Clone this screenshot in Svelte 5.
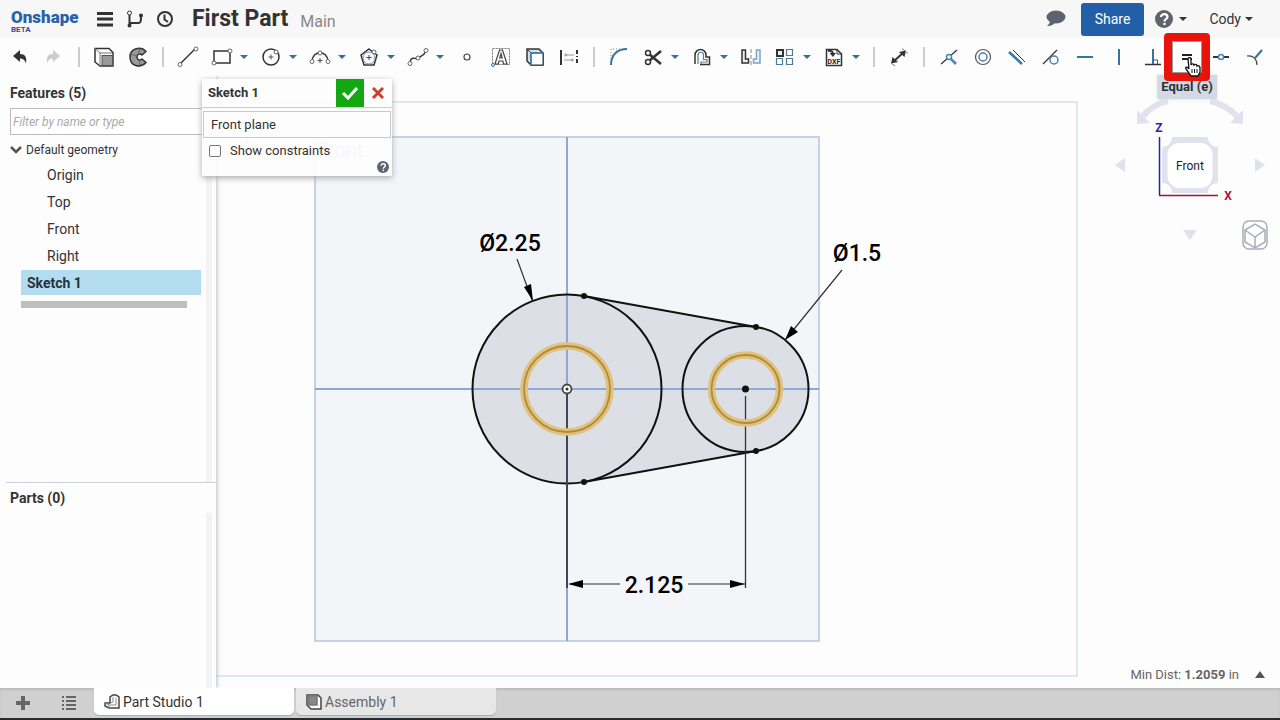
<script lang="ts">
  type Tool = { id: string; label: string; menu?: boolean; active?: boolean };

  // Toolbar groups, split by a thin rule. Shapes live in `glyphs`, on a 24x24 grid.
  const groups: Tool[][] = [
    [
      { id: 'undo', label: 'Undo' },
      { id: 'redo', label: 'Redo' },
    ],
    [
      { id: 'extrude', label: 'Extrude' },
      { id: 'revolve', label: 'Revolve' },
    ],
    [
      { id: 'line', label: 'Line' },
      { id: 'rect', label: 'Rectangle', menu: true },
      { id: 'circle', label: 'Circle', menu: true },
      { id: 'arc', label: 'Arc', menu: true },
      { id: 'polygon', label: 'Polygon', menu: true },
      { id: 'spline', label: 'Spline', menu: true },
      { id: 'point', label: 'Point' },
      { id: 'text', label: 'Text' },
      { id: 'use', label: 'Use' },
      { id: 'construction', label: 'Construction' },
    ],
    [
      { id: 'fillet', label: 'Fillet' },
      { id: 'trim', label: 'Trim', menu: true },
      { id: 'offset', label: 'Offset', menu: true },
      { id: 'mirror', label: 'Mirror' },
      { id: 'pattern', label: 'Pattern', menu: true },
      { id: 'dxf', label: 'Insert DXF', menu: true },
    ],
    [{ id: 'dimension', label: 'Dimension' }],
    [
      { id: 'coincident', label: 'Coincident' },
      { id: 'concentric', label: 'Concentric' },
      { id: 'parallel', label: 'Parallel' },
      { id: 'tangent', label: 'Tangent' },
      { id: 'horizontal', label: 'Horizontal' },
      { id: 'vertical', label: 'Vertical' },
      { id: 'perpendicular', label: 'Perpendicular' },
      { id: 'equal', label: 'Equal (e)', active: true },
      { id: 'midpoint', label: 'Midpoint' },
      { id: 'normal', label: 'Normal' },
    ],
  ];

  const undoArrow = 'M5 11 L12 5 V9 C17 9 19 12 18 18.500 C17 15 15 13.500 12 13.500 V17 Z';
  const k = 'stroke="#333" stroke-width="1.500"';
  const b = 'stroke="#3573a5" stroke-width="2"';
  const dot = (x: number, y: number) =>
    `<circle cx="${x}" cy="${y}" r="2" fill="#fff" stroke="#666" stroke-width="1"/>`;

  const glyphs: Record<string, string> = {
    undo: `<path d="${undoArrow}" fill="#333"/>`,
    redo: `<path d="${undoArrow}" fill="#ccc" transform="translate(23 0) scale(-1 1)"/>`,
    extrude: `<path d="M3 3.500H17L21 7.500V21H8L3 17Z" fill="#fff" ${k}/><path d="M3 3.500L8 8H20M8 8V21" stroke="#777"/><rect x="10" y="10.500" width="10.500" height="10" fill="#999" stroke="#555"/>`,
    revolve: `<path d="M20 6.500C15 1 4 3 4 12s10 12 16 5.500l-4-3.500c-2 2-5 1-5-2s3-4 5-2Z" fill="#999" ${k}/><path d="M14 3.500L12.500 8.500M4.500 9l6 2M14 20l-1-5" stroke="#666"/>`,
    line: `<path d="M4 19L19 4" ${k}/>${dot(4, 19.5)}${dot(20, 4)}`,
    rect: `<rect x="4" y="6" width="16" height="12" ${k}/>${dot(4, 18)}${dot(20, 6)}`,
    circle: `<circle cx="12" cy="12" r="8" ${k}/><path d="M12 9.500v5M9.500 12h5" stroke="#555"/>${dot(17, 7)}`,
    arc: `<path d="M4 16C5 5 19 5 20 16" ${k}/><path d="M12 13v5M9.500 15.500h5" stroke="#444"/>${dot(4, 16.5)}${dot(20, 16.5)}${dot(12, 8)}`,
    polygon: `<path d="M12 4L20 10L17 20H7L4 10Z" ${k}/><circle cx="12" cy="13" r="6" stroke="#6b91ba"/><path d="M12 10v5M9.500 12.500h5" stroke="#444"/>${dot(17, 7)}`,
    spline: `<path d="M4 18C5 10 9 15 12 13S18 11 20 6" ${k}/>${dot(4, 18.5)}${dot(12, 13)}${dot(20, 5.5)}`,
    point: `<circle cx="12" cy="12" r="3" fill="#fff" stroke="#444" stroke-width="1.200"/>`,
    text: `<rect x="3.500" y="3.500" width="17" height="16" stroke="#777" stroke-dasharray="2 1"/><path d="M6 19L10.500 5H13.500L18 19H14.500L13.800 16H10L9.300 19ZM10.800 13H13.200L12 8.500Z" fill="#fff" stroke="#444" stroke-width="1.200" fill-rule="evenodd"/><circle cx="4" cy="20" r="1.500" fill="#fff" stroke="#3573a5"/>`,
    use: `<path d="M4 4H16L20 8V20H8L4 16Z" fill="#ddd" ${k}/><path d="M4 4L8 8" stroke="#333"/><rect x="8" y="8" width="12" height="12" fill="#fff" stroke="#333"/><path d="M8 20V8H20" stroke="#2f86c5" stroke-width="1.500"/>`,
    construction: `<path d="M4 5V20" stroke="#333" stroke-width="2"/><path d="M20 5V20" stroke="#333" stroke-width="2" stroke-dasharray="4 2 1 2"/><path d="M7 10H17M7 15H17" stroke="#bbb" stroke-width="1.500"/><path d="M8 8l3 2-3 2M16 13l-3 2 3 2" fill="#aaa"/>`,
    fillet: `<path d="M4 20C4 10 10 4 20 4" ${b}/><path d="M4 14V4H14" stroke="#888" stroke-dasharray="1 2"/>`,
    trim: `<path d="M8 9L20 19M8 16L20 6" stroke="#333" stroke-width="2.500"/><circle cx="7" cy="8" r="2.500" fill="#fff" ${k}/><circle cx="7" cy="17" r="2.500" fill="#fff" ${k}/>`,
    offset: `<path d="M5 19V10a5.500 5.500 0 0 1 11 0V12H19.500V19.500H10" ${k}/><path d="M8 19V10a2.500 2.500 0 0 1 5.500 0V14.500H17V17H11V19" stroke="#4c81aa" stroke-width="1.200"/>`,
    mirror: `<path d="M3 5H6.500V14H9.500V18H3Z" fill="#eee" ${k}/><path d="M12 4V21" stroke="#888" stroke-dasharray="4 2"/><path d="M21 5H17.500V14H14.500V18H21Z" fill="#edf3f8" stroke="#7ca4c6" stroke-width="1.500"/>`,
    pattern: `<rect x="4" y="5" width="6" height="6" fill="#eee" stroke="#333" stroke-width="2"/><path d="M13.500 4.500h6v6h-6zM3.500 13.500h6v6h-6zM13.500 13.500h6v6h-6z" stroke="#487b94" stroke-width="1.200"/>`,
    dxf: `<path d="M4.500 4.500H15L19.500 9V20.500H4.500Z" fill="#fff" ${k}/><path d="M15 4.500V9H19.500" stroke="#333"/><path d="M6 6C9 5 11 7 11 9" stroke="#333" stroke-width="2"/><path d="M7.500 8H14L11 12Z" fill="#333"/><text x="12" y="19" fill="#222" font-size="7" font-weight="700" text-anchor="middle" font-family="Roboto, sans-serif">DXF</text>`,
    dimension: `<path d="M6 17L17 7" stroke="#333" stroke-width="2"/><path d="M4 18.500L5.500 12L11 17ZM19 5.500L12 7L17.500 12Z" fill="#333"/><path d="M4 18l4 3M15 3.500l6 5" stroke="#777"/>`,
    coincident: `<path d="M4 19L20 5" stroke="#333" stroke-width="1.200"/><path d="M12 12L19 19" stroke="#4488b9" stroke-width="2.500"/><circle cx="12" cy="12" r="2.500" fill="#fff" stroke="#4488b9" stroke-width="1.500"/>`,
    concentric: `<circle cx="12" cy="12" r="7.500" stroke="#555" stroke-width="1.200"/><circle cx="12" cy="12" r="4" stroke="#4882aa" stroke-width="1.500"/>`,
    parallel: `<path d="M4 7L17 19" stroke="#3978aa" stroke-width="2.500"/><path d="M8 5L20 17" stroke="#333"/>`,
    tangent: `<path d="M4 19L18 5" stroke="#333" stroke-width="1.200"/><circle cx="15" cy="15" r="4" stroke="#4882aa" stroke-width="1.500"/>`,
    horizontal: `<path d="M4 12H20" ${b}/>`,
    vertical: `<path d="M12 4V20" ${b}/>`,
    perpendicular: `<path d="M4 19.500H20" ${k}/><path d="M12 4V19" ${b}/><path d="M12 15h4.500v4" stroke="#555"/>`,
    equal: `<path d="M7 10H17M7 14H17" stroke="#222" stroke-width="2"/>`,
    midpoint: `<path d="M4 12H20" stroke="#333" stroke-width="2"/><circle cx="12" cy="12" r="2.500" fill="#fff" stroke="#4488b9" stroke-width="1.500"/>`,
    normal: `<path d="M4 11C10 10 14 14 14 20" stroke="#444" stroke-width="1.200"/><path d="M12 13L19 5" ${b}/>`,
  };

  const planes = ['Origin', 'Top', 'Front', 'Right'];
  let filter = $state('');
  let plane = $state('Front plane');
  let showConstraints = $state(false);
</script>

<div class="app">
  <header>
    <a class="logo" href="#home"><b>Onshape</b><small>BETA</small></a>
    <nav>
      <button aria-label="Document menu">
        <svg width="20" height="20" fill="none" stroke="#333" stroke-width="3"><path d="M2 4.500H18M2 10H18M2 16H18" /></svg>
      </button>
      <button aria-label="Versions">
        <svg width="20" height="20" fill="none" stroke="#333" stroke-width="2">
          <path d="M4.500 6V16M4.500 14H14C16 14 16 11 16 7" />
          <circle cx="4.500" cy="4" r="2" fill="#fff" stroke-width="1" />
          <circle cx="4.500" cy="16.500" r="1" fill="#333" />
          <circle cx="16" cy="6.500" r="1" fill="#333" />
        </svg>
      </button>
      <button aria-label="History">
        <svg width="20" height="20" fill="none" stroke="#333" stroke-width="2">
          <circle cx="10" cy="10" r="7" /><path d="M9.500 5.500V10.500L13 13" />
        </svg>
      </button>
    </nav>
    <h1>First Part</h1>
    <span class="branch">Main</span>
    <div class="account">
      <button aria-label="Comments">
        <svg width="20" height="20" fill="#5c6370">
          <ellipse cx="10" cy="8" rx="9.500" ry="6.500" /><path d="M4 11C4 14 3 15 1 17C5 17 8 16 10 12Z" />
        </svg>
      </button>
      <button class="share">Share</button>
      <button class="drop" aria-label="Help">{@render help(18)}<i class="caret dark"></i></button>
      <button class="drop user">Cody<i class="caret dark"></i></button>
    </div>
  </header>

  <div class="toolbar" role="toolbar" aria-label="Sketch tools">
    {#each groups as group, g}
      {#if g > 0}<span class="rule"></span>{/if}
      {#each group as tool}
        <div class="tool">
          <button class="icon" aria-label={tool.label}>
            <svg width="24" height="24" fill="none">{@html glyphs[tool.id]}</svg>
          </button>
          {#if tool.menu}
            <button class="more" aria-label="{tool.label} options"><i class="caret"></i></button>
          {/if}
          {#if tool.active}
            <span class="tip" role="tooltip">{tool.label}</span>
            <span class="highlight"></span>
            <svg class="pointer" width="18" height="20" viewBox="0 0 18 20">
              <path
                d="M3 2C3 0 6 0 6 2V8C7 6 9 7 9 8C10 7 12 7 12 9C13 8 15 9 15 11V15L13 19H6L1 12C0 10 2 9 4 12Z"
                fill="#fff" stroke="#111" stroke-width="1.300"
              />
              <path d="M7 12V16M9.500 12V16M12 12V16" stroke="#111" />
            </svg>
          {/if}
        </div>
      {/each}
    {/each}
  </div>

  <main>
    <svg class="canvas" viewBox="0 76 1280 612" fill="none">
      <rect x="100" y="102" width="977" height="574" stroke="#cfe3ea" stroke-width="1.500" />
      <rect x="315" y="137" width="504" height="504" fill="#f3f5f9" stroke="#b4c4e0" stroke-width="1.500" />
      <text x="317" y="157" class="plane-name">Front</text>

      <!-- part outline -->
      <path d="M584 296L756 327A63 63 0 0 1 756 451L584 482A94.500 94.500 0 1 1 584 296Z" fill="#dddfe7" />
      <path d="M315 389H819M567 137V641" stroke="#8ba9d3" stroke-width="2" />
      <g stroke="#111" stroke-width="2">
        <circle cx="567" cy="389" r="94.500" />
        <circle cx="745.500" cy="389" r="63" />
        <path d="M584 296L756 327M584 482L756 451" />
      </g>

      <!-- extension and dimension lines -->
      <path d="M567 392V588" stroke="#414555" stroke-width="2" />
      <path d="M745.500 396V588" stroke="#333" stroke-width="1.300" />
      <path d="M570 584H620M688 584H745M517 259L532 300M842 270L786 339" stroke="#333" stroke-width="1.200" />
      <path d="M568 584L583 580V588ZM745 584L730 580V588ZM533 301L524 287L531 284ZM785 340L791 326L798 332Z" fill="#000" />

      <!-- circles picked for the constraint -->
      {#each [{ x: 567, r: 43 }, { x: 745.5, r: 34 }] as c}
        <circle cx={c.x} cy="389" r={c.r} stroke="#dfc27d" stroke-width="7.500" />
        <circle cx={c.x} cy="389" r={c.r} stroke="#b18a37" stroke-width="1.800" />
      {/each}

      <g fill="#111">
        <circle cx="584" cy="296" r="3" />
        <circle cx="584" cy="482" r="3" />
        <circle cx="756" cy="327" r="3" />
        <circle cx="756" cy="451" r="3" />
        <circle cx="745.500" cy="389" r="3.500" />
      </g>
      <circle cx="567" cy="389" r="4.500" fill="#fff" stroke="#444" stroke-width="1.800" />
      <circle cx="567" cy="389" r="1.500" fill="#333" />

      <g class="dim">
        <text x="510" y="251">Ø2.25</text>
        <text x="857" y="261">Ø1.5</text>
        <text x="654" y="593">2.125</text>
      </g>
    </svg>

    <aside>
      <section class="features">
        <h2>Features (5)</h2>
        <input class="filter" bind:value={filter} aria-label="Filter features" placeholder="Filter by name or type" />
        <button class="folder">
          <svg width="12" height="8" fill="none" stroke="#555" stroke-width="2.500"><path d="M1 1L6 6L11 1" /></svg>
          Default geometry
        </button>
        <ul>
          {#each planes as name}
            <li>{name}</li>
          {/each}
        </ul>
        <button class="current">Sketch 1</button>
        <div class="rollback"></div>
      </section>
      <section class="parts">
        <h2>Parts (0)</h2>
      </section>
    </aside>

    <form class="dialog" onsubmit={(e) => e.preventDefault()}>
      <div class="dialog-head">
        <h2>Sketch 1</h2>
        <button class="ok" aria-label="Accept">
          <svg width="18" height="16" fill="none" stroke="#fff" stroke-width="3"><path d="M2 8L7 13L16 3" /></svg>
        </button>
        <button class="cancel" aria-label="Cancel">
          <svg width="12" height="12" fill="none" stroke="#c9402c" stroke-width="3"><path d="M1 1L11 11M11 1L1 11" /></svg>
        </button>
      </div>
      <input class="plane" bind:value={plane} aria-label="Sketch plane" />
      <label class="check"><input type="checkbox" bind:checked={showConstraints} />Show constraints</label>
      <button class="dialog-help" aria-label="Sketch help">{@render help(12)}</button>
    </form>

    <svg class="view-cube" width="160" height="160" viewBox="1110 92 160 160">
      <path d="M1168 101Q1153 104 1142 117M1210 101Q1225 104 1238 117" stroke="#e0e3ee" stroke-width="6" fill="none" />
      <path d="M1137 110V124L1150 123ZM1243 110V124L1230 123Z" fill="#dfe2ee" />
      <path d="M1115 165L1125 158V172ZM1265 165L1255 158V172ZM1183 230H1197L1190 240Z" fill="#dfe2ed" />
      <path
        d="M1172 137H1208C1208 143 1212 147 1218 147V183C1212 183 1208 187 1208 193H1172C1172 187 1168 183 1162 183V147C1168 147 1172 143 1172 137Z"
        fill="#e0e3ee"
      />
      <rect x="1167.500" y="143" width="45" height="45" rx="12" fill="#fff" />
      <path d="M1159.500 137V195" stroke="#3020a0" stroke-width="1.500" />
      <path d="M1159 195.500H1218" stroke="#a3133d" stroke-width="1.500" />
      <text x="1190" y="170" class="face">Front</text>
      <text x="1159" y="132" class="axis z">Z</text>
      <text x="1228" y="200" class="axis x">X</text>
      <g fill="#fff" stroke="#aaadb8" stroke-width="1.500">
        <rect x="1243" y="221" width="24" height="28" rx="6" />
        <path d="M1245 230L1255 224L1265 230V242L1255 248L1245 242ZM1245 230L1255 237L1265 230M1255 237V248" />
      </g>
    </svg>

    <div class="measure">
      <span>Min Dist: <b>1.2059</b> in</span>
      <svg width="10" height="8" fill="#555"><path d="M0 7L5 0L10 7Z" /></svg>
    </div>
  </main>

  <footer>
    <button class="foot" aria-label="New tab">
      <svg width="14" height="14" stroke="#666" stroke-width="4"><path d="M7 0V14M0 7H14" /></svg>
    </button>
    <button class="foot" aria-label="Tab list">
      <svg width="14" height="14" stroke="#666" stroke-width="2"><path d="M0 1H2M4 1H14M0 5H2M4 5H14M0 9H2M4 9H14M0 13H2M4 13H14" /></svg>
    </button>
    <button class="tab selected">
      <svg width="16" height="16" fill="none" stroke="#444" stroke-width="1.500">
        <path d="M1 9H6V3L9 1H12L15 3V14H5L1 12Z" fill="#fff" /><path d="M12 4V11H5M1 9L5 11V14M9 3V8L6 9" stroke-width="1" stroke="#888" />
      </svg>
      Part Studio 1
    </button>
    <button class="tab">
      <svg width="16" height="16" fill="none" stroke="#444" stroke-width="1.500">
        <path d="M1 1H12L15 4V15H5L1 11Z" fill="#fff" /><path d="M2 2H11V11H3Z" fill="#888" stroke="#777" />
      </svg>
      Assembly 1
    </button>
  </footer>
</div>

{#snippet help(size: number)}
  <svg width={size} height={size} viewBox="0 0 18 18" fill="none">
    <circle cx="9" cy="9" r="9" fill="#5f636d" />
    <path d="M6 7C6 3 12.500 3.500 12.500 7C12.500 9 9.500 9 9.500 11.500" stroke="#fff" stroke-width="2.200" />
    <circle cx="9.500" cy="14" r="1.300" fill="#fff" />
  </svg>
{/snippet}

<style>
  :global(body) {
    overflow: hidden;
  }
  .app {
    display: flex;
    flex-direction: column;
    height: 100vh;
    background: #fdfdfd;
    color: #333;
    font-family: Roboto, 'Liberation Sans', sans-serif;
    font-size: 13px;
  }
  button {
    display: flex;
    align-items: center;
    justify-content: center;
    padding: 0;
    border: 0;
    background: none;
    color: inherit;
    font: inherit;
  }
  svg {
    display: block;
    flex: none;
  }
  h1,
  h2,
  ul {
    margin: 0;
    padding: 0;
  }
  h2 {
    font-size: 14px;
    line-height: 18px;
    font-weight: 700;
  }
  input {
    box-sizing: border-box;
    color: inherit;
    font: inherit;
  }
  .caret {
    border: 4px solid transparent;
    border-top-color: #3d6aa3;
    border-bottom: 0;
  }
  .caret.dark {
    border-top-color: #333;
  }

  header {
    display: flex;
    align-items: center;
    flex: none;
    height: 38px;
    padding: 0 27px 0 11px;
    background: #f7f7f7;
  }
  .logo {
    display: flex;
    flex-direction: column;
    width: 84px;
    padding-top: 4px;
    color: #2763a8;
    text-decoration: none;
  }
  .logo b {
    font: 900 17px/18px Roboto, sans-serif;
  }
  .logo small {
    color: #46468c;
    font-size: 8px;
    line-height: 8px;
    font-weight: 700;
  }
  nav {
    display: flex;
    gap: 10px;
  }
  h1 {
    margin-left: 17px;
    font-size: 23px;
    line-height: 24px;
    white-space: nowrap;
  }
  .branch {
    margin: 4px 0 0 12px;
    color: #888;
    font-size: 16px;
  }
  .account {
    display: flex;
    align-items: center;
    margin-left: auto;
  }
  .share {
    height: 33px;
    margin: 0 11px 0 15px;
    padding: 0 14px;
    border-radius: 3px;
    background: #225fa6;
    color: #fff;
    font-size: 14px;
  }
  .drop {
    gap: 6px;
  }
  .user {
    gap: 4px;
    margin-left: 22px;
    font-size: 14px;
  }

  .toolbar {
    position: relative;
    z-index: 1;
    display: flex;
    align-items: center;
    gap: 10px;
    flex: none;
    height: 38px;
    padding: 0 8px;
    background: #fdfdfd;
  }
  .tool {
    position: relative;
    display: flex;
    gap: 5px;
  }
  .more {
    width: 10px;
  }
  .rule {
    width: 2px;
    height: 20px;
    margin: 0 2px;
    background: #ccc;
  }
  .highlight {
    position: absolute;
    z-index: 1;
    inset: -12px -11px;
    border: 8px solid #e8140c;
    border-radius: 4px;
    box-shadow: inset 0 0 0 1px #999;
  }
  .tip {
    position: absolute;
    top: 30px;
    left: 50%;
    padding: 0 4px;
    transform: translateX(-50%);
    background: #d4dae4;
    box-shadow: 0 0 3px #d4dae4;
    color: #2d3038;
    font-weight: 700;
    line-height: 24px;
    white-space: nowrap;
  }
  .pointer {
    position: absolute;
    z-index: 1;
    top: 12px;
    left: 10px;
  }

  main {
    position: relative;
    display: flex;
    flex: 1;
    min-height: 0;
  }
  .canvas {
    position: absolute;
    width: 100%;
    height: 100%;
  }
  .dim {
    fill: #000;
    font-size: 23px;
    font-weight: 500;
    text-anchor: middle;
  }
  .plane-name {
    fill: #98a2b8;
    font-size: 20px;
  }

  aside {
    position: relative;
    display: flex;
    flex-direction: column;
    width: 216px;
    background: #fdfdfd;
    box-shadow: 1px 0 4px #bbb;
  }
  .features {
    display: flex;
    flex-direction: column;
    align-items: flex-start;
    flex: 2;
    padding: 8px 0 0 10px;
    background: linear-gradient(#f3f3f6, #f3f3f6) right 4px top 100px / 6px 100% no-repeat;
  }
  .filter {
    width: 200px;
    height: 27px;
    margin: 6px 0;
    padding: 0 2px;
    border: 1px solid #bbb;
    background: #fff;
    font-size: 12px;
  }
  .filter::placeholder {
    color: #aaa;
    font-style: italic;
    opacity: 1;
  }
  .folder {
    gap: 4px;
    height: 18px;
    font-size: 12px;
  }
  li {
    padding-left: 37px;
    font-size: 14px;
    line-height: 27px;
    list-style: none;
  }
  ul {
    padding-top: 3px;
  }
  .current {
    justify-content: flex-start;
    width: 180px;
    height: 25px;
    margin-left: 11px;
    padding-left: 6px;
    background: #b3dcf0;
    color: #26333d;
    font-size: 14px;
    font-weight: 700;
  }
  .rollback {
    width: 166px;
    height: 7px;
    margin: 6px 0 0 11px;
    background: #bfbfbf;
  }
  .parts {
    flex: 1;
    margin-left: 6px;
    padding: 6px 4px 0;
    border-top: 1px solid #ccd0da;
    background: linear-gradient(#f3f3f6, #f3f3f6) right 4px top 30px / 6px 100% no-repeat;
  }

  .dialog {
    position: absolute;
    top: 3px;
    left: 202px;
    width: 190px;
    padding-bottom: 3px;
    background: rgba(253, 253, 253, 0.93);
    box-shadow: 0 2px 6px #aaa;
  }
  .dialog-head {
    display: flex;
    align-items: center;
    height: 28px;
    padding-left: 6px;
    border-bottom: 1px solid #ccc;
  }
  .dialog-head h2 {
    flex: 1;
    font-size: 13px;
  }
  .ok {
    width: 28px;
    height: 28px;
    background: #12a812;
  }
  .cancel {
    width: 28px;
    height: 28px;
  }
  .plane {
    display: block;
    width: 188px;
    height: 27px;
    margin: 3px 1px 0;
    padding: 0 7px;
    border: 1px solid #c8c8d0;
    background: #fdfdfd;
    font-size: 13px;
  }
  .check {
    display: flex;
    align-items: center;
    gap: 9px;
    height: 25px;
    padding-left: 7px;
  }
  .check input {
    appearance: none;
    width: 12px;
    height: 12px;
    margin: 0;
    border: 1px solid #777;
    border-radius: 2px;
    background: #fff;
  }
  .check input:checked {
    background: #225fa6;
  }
  .dialog-help {
    margin: -2px 3px 0 auto;
  }

  .view-cube {
    position: absolute;
    top: 16px;
    right: 10px;
  }
  .face {
    fill: #222;
    font-size: 12px;
    text-anchor: middle;
  }
  .axis {
    font-size: 12px;
    font-weight: 700;
    text-anchor: middle;
  }
  .z {
    fill: #2d1fb0;
  }
  .x {
    fill: #b0143c;
  }
  .measure {
    position: absolute;
    right: 15px;
    bottom: 5px;
    display: flex;
    align-items: center;
    gap: 16px;
    color: #666;
    line-height: 16px;
  }

  footer {
    position: relative;
    display: flex;
    flex: none;
    height: 30px;
    border-bottom: 2px solid #252b35;
    background: #d0d0d0;
    box-shadow: inset 0 2px 2px #bbb;
  }
  .foot {
    width: 46px;
  }
  .tab {
    justify-content: flex-start;
    gap: 3px;
    width: 200px;
    height: 27px;
    margin-left: 2px;
    padding: 0 10px;
    border-radius: 0 0 5px 5px;
    background: #e7e7e7;
    box-shadow: 0 1px 1px #aaa;
    color: #666;
    font-size: 14px;
  }
  .selected {
    background: #fff;
    color: #333;
  }
</style>
